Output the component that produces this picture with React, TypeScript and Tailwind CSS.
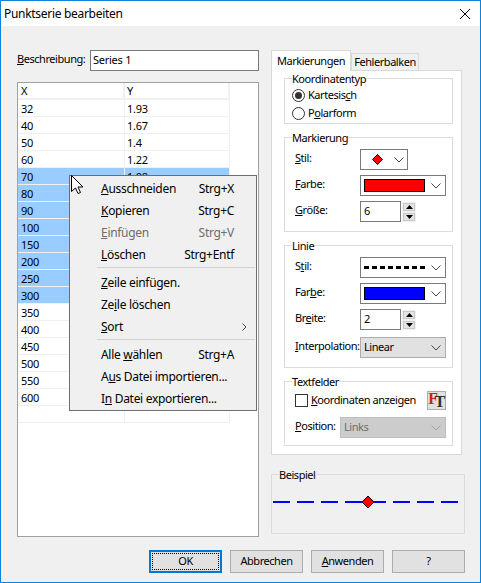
import React from "react";

const ROWS: [string, string][] = [
  ["32", "1.93"],
  ["40", "1.67"],
  ["50", "1.4"],
  ["60", "1.22"],
  ["70", "1.08"],
  ["80", ""],
  ["90", ""],
  ["100", ""],
  ["150", ""],
  ["200", ""],
  ["250", ""],
  ["300", ""],
  ["350", ""],
  ["400", ""],
  ["450", ""],
  ["500", ""],
  ["550", ""],
  ["600", ""],
  ["", ""],
];

const Chevron = ({ light }: { light?: boolean }) => (
  <svg width="10" height="6" viewBox="0 0 10 6" fill="none" stroke={light ? "#a0a0a0" : "#444"} className="shrink-0">
    <path d="M0.5 0.5 L5 5 L9.5 0.5" />
  </svg>
);

function Group({ title, height, children }: { title: string; height: string; children: React.ReactNode }) {
  return (
    <div className={`border border-[#dcdcdc] ${height}`}>
      <div className="-mt-[8px] mb-[-1px] ml-[7px] h-[16px] w-fit bg-white leading-[16px]">{title}</div>
      {children}
    </div>
  );
}

function Radio({ checked, children }: { checked?: boolean; children: React.ReactNode }) {
  return (
    <div className="flex h-[18px] items-center pl-[7px]">
      <div className="flex h-[13px] w-[13px] items-center justify-center rounded-full border border-[#333] bg-white">
        {checked && <div className="h-[7px] w-[7px] rounded-full bg-[#333]" />}
      </div>
      <span className="ml-[3px]">{children}</span>
    </div>
  );
}

function Field({ label, labelWidth = "w-[65px]", children }: { label: React.ReactNode; labelWidth?: string; children: React.ReactNode }) {
  return (
    <div className="flex items-center pl-[10px]">
      <div className={`${labelWidth} shrink-0 -mt-[3px] whitespace-nowrap`}>{label}</div>
      {children}
    </div>
  );
}

function Spin({ value }: { value: string }) {
  return (
    <div className="flex items-center">
      <div className="flex h-[21px] w-[41px] items-center border border-[#7a7a7a] bg-white pl-[3px]">{value}</div>
      <div className="ml-px flex h-[20px] w-[14px] flex-col justify-between bg-[#f0f0f0] p-px">
        <div className="flex h-[8px] items-center justify-center border border-[#c8c8c8] bg-[#e4e4e4]">
          <svg width="7" height="4" viewBox="0 0 7 4"><path d="M3.5 0 L7 4 H0 Z" fill="#000" /></svg>
        </div>
        <div className="flex h-[8px] items-center justify-center border border-[#c8c8c8] bg-[#e4e4e4]">
          <svg width="7" height="4" viewBox="0 0 7 4"><path d="M0 0 H7 L3.5 4 Z" fill="#000" /></svg>
        </div>
      </div>
    </div>
  );
}

function Combo({ children }: { children: React.ReactNode }) {
  return (
    <div className="flex h-[21px] w-[86px] items-center justify-between border border-[#7a7a7a] bg-white pl-[3px] pr-[4px]">
      {children}
      <Chevron />
    </div>
  );
}

function MenuItem({ children, shortcut, disabled, arrow }: { children: React.ReactNode; shortcut?: string; disabled?: boolean; arrow?: boolean }) {
  return (
    <div className={`flex h-[22px] items-center pl-[31px] pr-[22px] pt-px ${disabled ? "text-[#6d6d6d]" : "text-black"}`}>
      <span className="flex-1 whitespace-nowrap">{children}</span>
      {shortcut && <span className="whitespace-nowrap">{shortcut}</span>}
      {arrow && (
        <svg width="5" height="8" viewBox="0 0 5 8" fill="none" stroke="#444" className="-mr-[13px]">
          <path d="M0.5 0.5 L4 4 L0.5 7.5" />
        </svg>
      )}
    </div>
  );
}

const MenuSep = () => <div className="my-[2px] ml-[27px] mr-px h-[2px] border-t border-[#d0d0d0]" />;

function Btn({ children, primary }: { children: React.ReactNode; primary?: boolean }) {
  if (primary) {
    return (
      <div className="flex h-[23px] w-[73px] border-2 border-[#0078d7] bg-[#e1e1e1] p-px">
        <div className="flex flex-1 items-center justify-center border border-dotted border-black">{children}</div>
      </div>
    );
  }
  return (
    <div className="flex h-[23px] w-[73px] items-center justify-center border border-[#adadad] bg-[#e1e1e1]">{children}</div>
  );
}

export default function App() {
  return (
    <div className="flex h-[583px] w-[481px] flex-col border border-[#0c82dc] bg-[#f0f0f0] font-['Noto_Sans',sans-serif] text-[11px] tracking-[-0.45px] text-black">
      {/* Title bar */}
      <div className="flex h-[25px] shrink-0 items-center justify-between bg-white pl-[3px] pr-[10px]">
        <span className="text-[12px] tracking-[-0.3px]">Punktserie bearbeiten</span>
        <svg width="10" height="10" viewBox="0 0 10 10" stroke="#000" fill="none">
          <path d="M0 0 L10 10 M10 0 L0 10" />
        </svg>
      </div>

      <div className="flex">
        {/* Left column */}
        <div className="ml-[16px] w-[242px] shrink-0 pt-[24px]">
          <div className="flex items-center">
            <span className="w-[73px] -mt-[2px]"><u>B</u>eschreibung:</span>
            <div className="flex h-[21px] flex-1 items-center border border-[#7a7a7a] bg-white pl-[2px] tracking-[-0.25px]">Series 1</div>
          </div>

          <div className="relative mt-[11px] h-[455px] border border-[#a0a0a0] bg-white">
            <div className="grid w-[212px] grid-cols-[107px_105px] tracking-[-0.25px]">
              <div className="flex h-[17px] items-center border-b-2 border-r-2 border-[#f0f0f0] pl-[3px] pt-[2px]">X</div>
              <div className="flex h-[17px] items-center border-b-2 border-r-2 border-[#f0f0f0] pl-[2px] pt-[2px]">Y</div>
              {ROWS.map(([x, y], i) => {
                const selected = i >= 4 && i <= 11;
                const bg = selected ? "bg-[#99ccff]" : "bg-white";
                return (
                  <React.Fragment key={i}>
                    <div className={`flex h-[17px] items-center border-b border-r border-[#f0f0f0] pl-[3px] pt-[3px] ${bg}`}>{x}</div>
                    <div className={`flex h-[17px] items-center border-b border-r border-[#f0f0f0] pl-[2px] pt-[3px] ${bg}`}>{y}</div>
                  </React.Fragment>
                );
              })}
            </div>

            {/* Context menu */}
            <div className="absolute left-[51px] top-[92px] w-[188px] border border-[#6e6e6e] bg-[#f0f0f0] py-[1px] text-[12px] tracking-[-0.3px]">
              <MenuItem shortcut="Strg+X"><u>A</u>usschneiden</MenuItem>
              <MenuItem shortcut="Strg+C"><u>K</u>opieren</MenuItem>
              <MenuItem shortcut="Strg+V" disabled><u>E</u>infügen</MenuItem>
              <MenuItem shortcut="Strg+Entf"><u>L</u>öschen</MenuItem>
              <MenuSep />
              <MenuItem><u>Z</u>eile einfügen.</MenuItem>
              <MenuItem>Ze<u>i</u>le löschen</MenuItem>
              <MenuItem arrow><u>S</u>ort</MenuItem>
              <MenuSep />
              <MenuItem shortcut="Strg+A">Alle <u>w</u>ählen</MenuItem>
              <MenuItem>A<u>u</u>s Datei importieren...</MenuItem>
              <MenuItem>I<u>n</u> Datei exportieren...</MenuItem>
            </div>

            {/* Mouse pointer */}
            <svg className="absolute left-[53px] top-[92px]" width="13" height="20" viewBox="0 0 13 20">
              <path d="M0.5 0.5 V16.5 L4.5 13 L7 18.5 L9.5 17.5 L7 12 H12 Z" fill="#fff" stroke="#000" />
            </svg>
          </div>
        </div>

        {/* Right column */}
        <div className="ml-[12px] w-[194px] shrink-0 pt-[24px]">
          <div className="flex items-end">
            <div className="relative z-10 -mb-px flex h-[21px] w-[80px] items-center justify-center border border-b-0 border-[#d9d9d9] bg-white">Markierungen</div>
            <div className="flex h-[17px] w-[68px] items-center justify-center border border-b-0 border-[#d9d9d9]">Fehlerbalken</div>
          </div>

          <div className="flex h-[385px] w-[191px] flex-col gap-[13px] border border-[#d9d9d9] bg-white pl-[12px] pr-[8px] pt-[7px]">
            <Group title="Koordinatentyp" height="h-[46px]">
              <div>
                <Radio checked>Kartesis<u>c</u>h</Radio>
                <Radio>P<u>o</u>larform</Radio>
              </div>
            </Group>

            <Group title="Markierung" height="h-[95px]">
              <div className="mt-[4px] flex flex-col gap-[5px]">
                <Field label={<><u>S</u>til:</>}>
                  <div className="flex h-[21px] w-[48px] items-center justify-between border border-[#7a7a7a] bg-white pl-[11px] pr-[3px]">
                    <svg width="11" height="11" viewBox="0 0 11 11"><path d="M5.5 0.5 L10.5 5.5 L5.5 10.5 L0.5 5.5 Z" fill="#ff0000" stroke="#000" /></svg>
                    <Chevron />
                  </div>
                </Field>
                <Field label={<><u>F</u>arbe:</>}>
                  <Combo><div className="h-[13px] w-[61px] border border-black bg-[#ff0000]" /></Combo>
                </Field>
                <Field label={<><u>G</u>röße:</>}>
                  <Spin value="6" />
                </Field>
              </div>
            </Group>

            <Group title="Linie" height="h-[123px]">
              <div className="mt-[4px] flex flex-col gap-[5px]">
                <Field label={<>S<u>t</u>il:</>}>
                  <Combo>
                    <svg width="62" height="3" viewBox="0 0 62 3"><path d="M0 1.5 H62" stroke="#000" strokeWidth="3" strokeDasharray="5 3" /></svg>
                  </Combo>
                </Field>
                <Field label={<>Far<u>b</u>e:</>}>
                  <Combo><div className="h-[13px] w-[61px] border border-black bg-[#0000ff]" /></Combo>
                </Field>
                <Field label={<>Br<u>e</u>ite:</>}>
                  <Spin value="2" />
                </Field>
                <div className="mt-[2px]">
                  <Field label={<><u>I</u>nterpolation:</>}>
                    <div className="flex h-[21px] w-[86px] items-center justify-between border border-[#adadad] bg-[#e1e1e1] pl-[3px] pr-[4px]">
                      Linear
                      <Chevron />
                    </div>
                  </Field>
                </div>
              </div>
            </Group>

            <Group title="Textfelder" height="h-[65px]">
              <div className="mt-[2px] flex h-[19px] items-center pl-[10px] pr-[6px]">
                <div className="h-[13px] w-[13px] shrink-0 border border-[#333] bg-white" />
                <span className="ml-[3px] flex-1 whitespace-nowrap"><u>K</u>oordinaten anzeigen</span>
                <div className="flex h-[19px] w-[19px] shrink-0 items-center justify-center border border-[#adadad] bg-[#e1e1e1] font-['Liberation_Serif',serif] text-[16px] font-bold leading-none">
                  <span className="-mt-[3px] text-[#d02020]">F</span>
                  <span className="-ml-[3px] mt-[3px] text-[#303030]">T</span>
                </div>
              </div>
              <div className="mt-[7px]">
                <Field labelWidth="w-[45px]" label={<><u>P</u>osition:</>}>
                  <div className="flex h-[21px] w-[106px] items-center justify-between border border-[#bfbfbf] bg-[#cccccc] pl-[3px] pr-[4px] text-[#6d6d6d]">
                    Links
                    <Chevron light />
                  </div>
                </Field>
              </div>
            </Group>
          </div>

          {/* Preview */}
          <div className="mt-[19px] h-[60px] border border-[#dcdcdc]">
            <div className="-mt-[8px] mb-[-1px] ml-[7px] h-[16px] w-fit bg-[#f0f0f0] leading-[16px]">Beispiel</div>
            <svg className="ml-px mt-[13px]" width="190" height="14" viewBox="0 0 190 14">
              <path d="M0 7 H186" stroke="#0000ff" strokeWidth="2" strokeDasharray="17 7" />
              <path d="M95 1 L101 7 L95 13 L89 7 Z" fill="#ff0000" stroke="#000" />
            </svg>
          </div>
        </div>
      </div>

      {/* Buttons */}
      <div className="flex justify-end gap-[8px] pr-[15px] pt-[13px]">
        <Btn primary>OK</Btn>
        <Btn>Abbrechen</Btn>
        <Btn><u>A</u>nwenden</Btn>
        <Btn>?</Btn>
      </div>
    </div>
  );
}
